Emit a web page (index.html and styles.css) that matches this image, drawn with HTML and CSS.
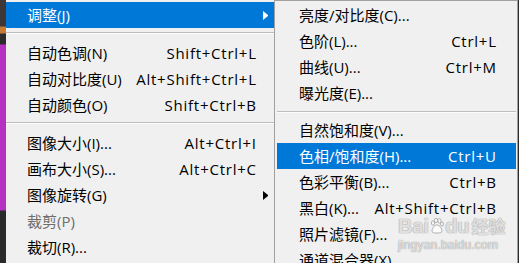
FILE: index.html
```html
<!DOCTYPE html>
<html lang="zh-CN">
<head>
  <meta charset="UTF-8">
  <title>图像 - 调整</title>
  <link rel="stylesheet" href="styles.css">
</head>
<body>

  <div class="screen">
    <div class="edge"></div>

    <div class="menu main">
      <div class="item active">
        <span class="label">调整(J)</span>
        <span class="arrow"></span>
      </div>
      <div class="sep"></div>
      <div class="item"><span class="label">自动色调(N)</span><span class="key">Shift+Ctrl+L</span><span class="arrow none"></span></div>
      <div class="item"><span class="label">自动对比度(U)</span><span class="key">Alt+Shift+Ctrl+L</span><span class="arrow none"></span></div>
      <div class="item"><span class="label">自动颜色(O)</span><span class="key">Shift+Ctrl+B</span><span class="arrow none"></span></div>
      <div class="sep"></div>
      <div class="item"><span class="label">图像大小(I)...</span><span class="key">Alt+Ctrl+I</span><span class="arrow none"></span></div>
      <div class="item"><span class="label">画布大小(S)...</span><span class="key">Alt+Ctrl+C</span><span class="arrow none"></span></div>
      <div class="item"><span class="label">图像旋转(G)</span><span class="arrow"></span></div>
      <div class="item disabled"><span class="label">裁剪(P)</span><span class="arrow none"></span></div>
      <div class="item"><span class="label">裁切(R)...</span><span class="arrow none"></span></div>
    </div>

    <div class="menu sub">
      <div class="item"><span class="label">亮度/对比度(C)...</span></div>
      <div class="item"><span class="label">色阶(L)...</span><span class="key">Ctrl+L</span></div>
      <div class="item"><span class="label">曲线(U)...</span><span class="key">Ctrl+M</span></div>
      <div class="item"><span class="label">曝光度(E)...</span></div>
      <div class="sep"></div>
      <div class="item"><span class="label">自然饱和度(V)...</span></div>
      <div class="item active"><span class="label">色相/饱和度(H)...</span><span class="key">Ctrl+U</span></div>
      <div class="item"><span class="label">色彩平衡(B)...</span><span class="key">Ctrl+B</span></div>
      <div class="item"><span class="label">黑白(K)...</span><span class="key">Alt+Shift+Ctrl+B</span></div>
      <div class="item"><span class="label">照片滤镜(F)...</span></div>
      <div class="item"><span class="label">通道混合器(X)...</span></div>
    </div>

    <!-- watermark from the source screenshot -->
    <div class="watermark">
      <div class="brand">
        <span>Bai</span>
        <svg width="14" height="16" viewBox="0 0 14 16">
          <ellipse cx="3" cy="5" rx="1.6" ry="2.2" />
          <ellipse cx="6" cy="2.5" rx="1.6" ry="2.2" />
          <ellipse cx="9.5" cy="2.8" rx="1.6" ry="2.2" />
          <ellipse cx="12" cy="6" rx="1.5" ry="2" />
          <path d="M7 7c-3 0-5 4-5 6s2 2 5 2 5 0 5-2-2-6-5-6z" />
        </svg>
        <span>du</span>
        <span class="cn">经验</span>
      </div>
      <div class="site">jingyan.baidu.com</div>
    </div>
  </div>

</body>
</html>
```

FILE: styles.css
```css
* {
  box-sizing: border-box;
}

body {
  margin: 0;
  background-color: #2b2b2b;
  font-family: 'Open Sans', 'Noto Sans CJK SC', sans-serif;
  font-size: 15px;
  color: #000;
}

.screen {
  position: relative;
  display: flex;
  width: 519px;
  height: 263px;
  overflow: hidden;
}

.edge {
  width: 6px;
  background: linear-gradient(#3d3735 0, #3d3735 26px, #c77a34 27px, #c77a34 33px,
    #2d2a2c 34px, #2d2a2c 44px, #b630c2 45px, #b630c2 210px, #2a2a2a 211px);
}

.menu {
  background-color: #f0f0f0;
  padding-top: 2px;
}

.main {
  width: 268px;
}

.sub {
  width: 244px;
  border: 1px solid #a0a0a0;
  border-bottom: none;
  padding: 1px 1px 0 2px;
}

.item {
  display: flex;
  align-items: center;
  height: 26px;
  line-height: 26px;
  white-space: nowrap;
}

.main .item {
  padding-left: 21px;
  padding-right: 6px;
}

.sub .item {
  padding-left: 22px;
  padding-right: 20px;
}

.label {
  flex: 1;
}

.key {
  text-align: right;
  letter-spacing: 0.75px;
  margin-right: -0.75px;
}

.arrow {
  width: 12px;
  height: 9px;
  display: flex;
  justify-content: flex-end;
}

.arrow::after {
  content: "";
  border-left: 5px solid #000;
  border-top: 4.5px solid transparent;
  border-bottom: 4.5px solid transparent;
}

.arrow.none::after {
  display: none;
}

.item.active {
  background-color: #0078d7;
  color: #fff;
}

.item.active .arrow::after {
  border-left-color: #fff;
}

.item.disabled {
  color: #6d6d6d;
}

.main .sep {
  height: 12px;
  padding-top: 4px;
}

.sub .sep {
  height: 11px;
  padding-top: 5px;
}

.sep::after {
  content: "";
  display: block;
  height: 1px;
  background-color: #bdbdbd;
  border-bottom: 1px solid #fcfcfc;
}

.watermark {
  position: absolute;
  left: 398px;
  top: 214px;
  color: rgba(255, 255, 255, 0.7);
  text-shadow: 0 0 1px #9a9a9a, 0 0 1px #9a9a9a;
}

.brand {
  display: flex;
  align-items: center;
  font-family: 'Liberation Sans', sans-serif;
  font-size: 20px;
  font-weight: bold;
  line-height: 24px;
}

.brand svg {
  fill: rgba(255, 255, 255, 0.7);
  stroke: #a0a0a0;
  stroke-width: 0.8;
  margin: 0 1px;
}

.brand .cn {
  font-family: 'Noto Sans CJK SC', sans-serif;
  font-size: 17px;
  margin-left: 2px;
}

.site {
  font-family: 'Liberation Sans', sans-serif;
  font-size: 12px;
  line-height: 14px;
  letter-spacing: 0.2px;
}
```
